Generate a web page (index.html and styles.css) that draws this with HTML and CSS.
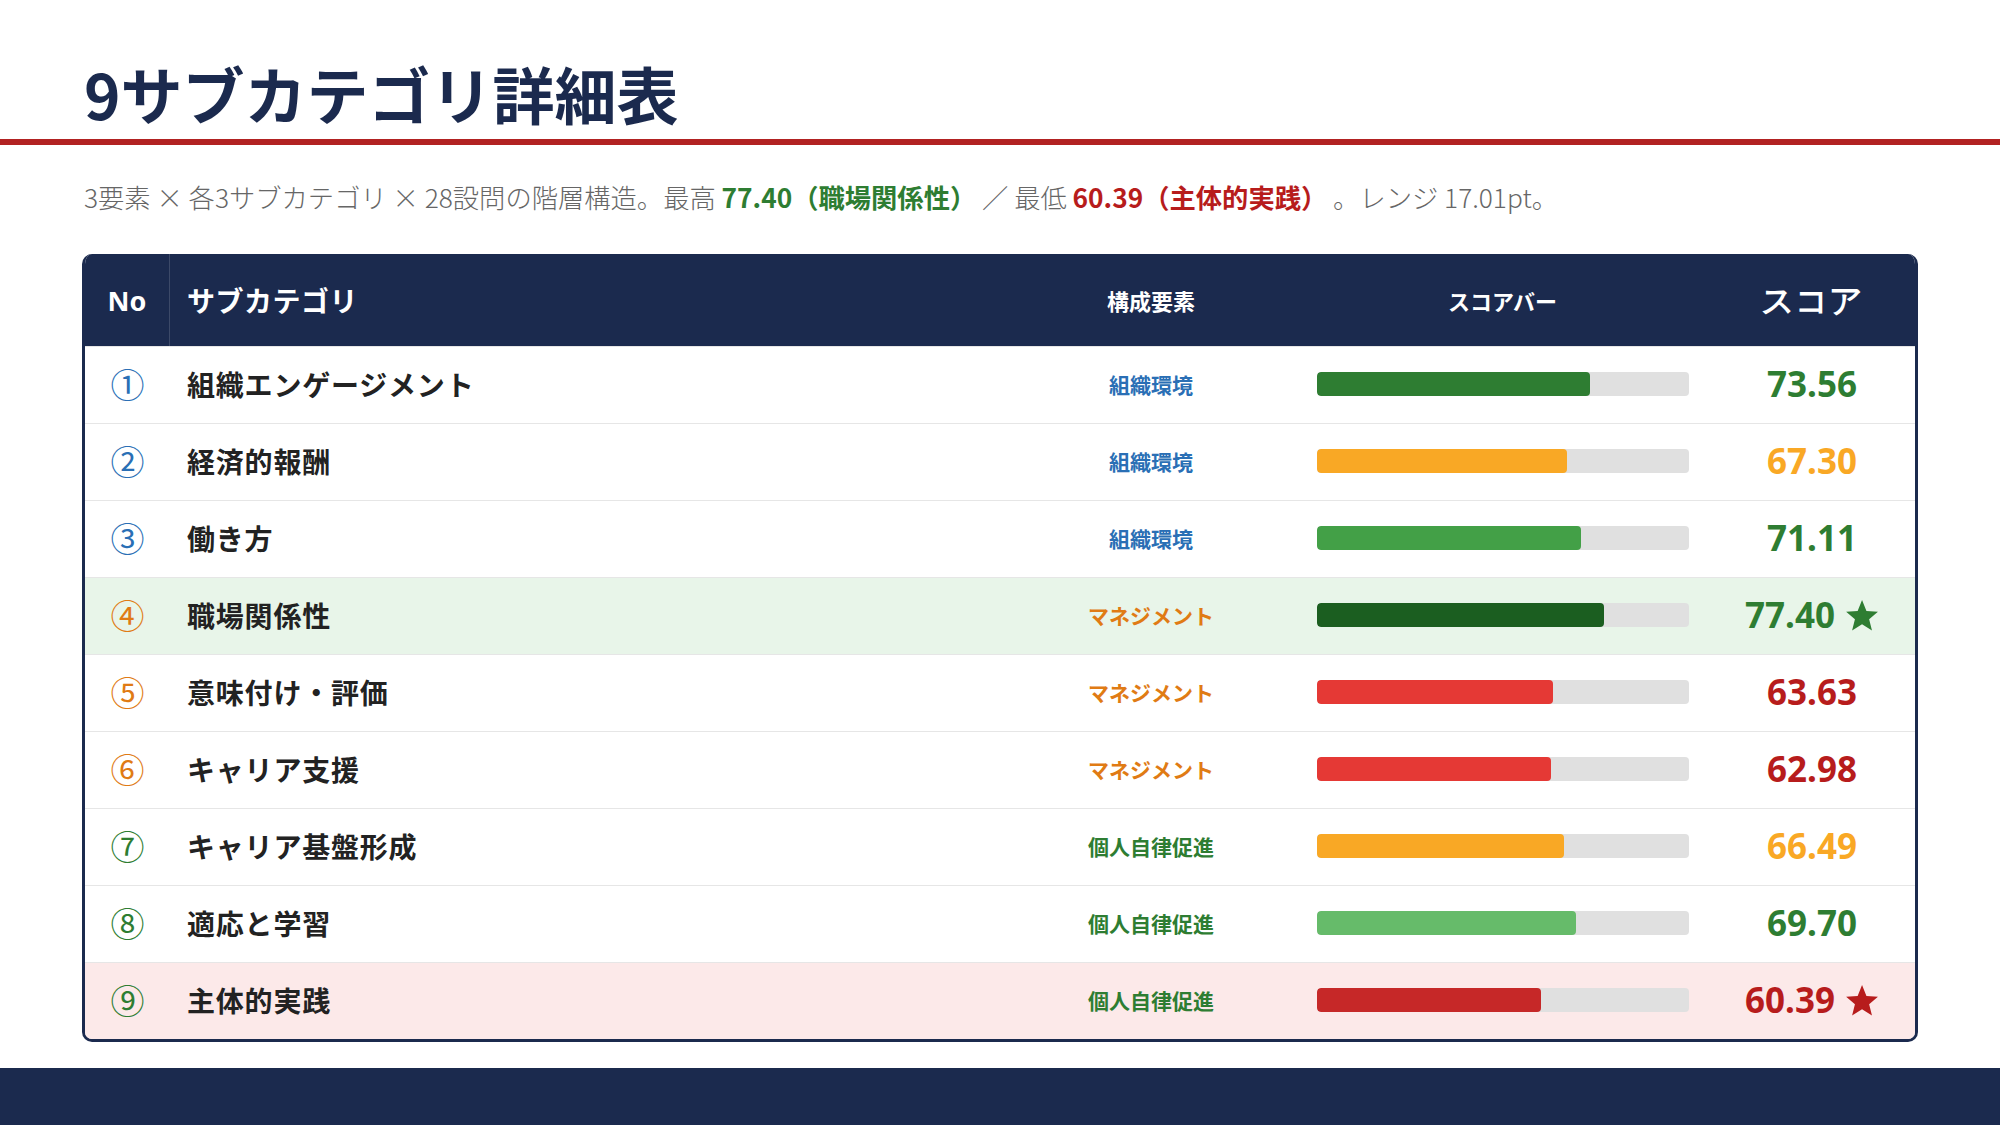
FILE: index.html
```html
<!DOCTYPE html>
<html lang="ja">
<head>
<meta charset="utf-8">
<title>9サブカテゴリ詳細表</title>
<link rel="stylesheet" href="styles.css">
</head>
<body>
<div class="page">
  <header class="top">
    <h1 class="title">9サブカテゴリ詳細表</h1>
  </header>
  <div class="rule"></div>
  <p class="lead">3要素 × 各3サブカテゴリ × 28設問の階層構造。最高 <b class="hi">77.40（職場関係性）</b> ／ 最低 <b class="lo">60.39（主体的実践）</b> 。レンジ 17.01pt。</p>

  <section class="table">
    <div class="row head">
      <div class="c-no">No</div>
      <div class="c-name">サブカテゴリ</div>
      <div class="c-el">構成要素</div>
      <div class="c-bar">スコアバー</div>
      <div class="c-score">スコア</div>
    </div>

    <div class="row">
      <div class="c-no num blue">①</div>
      <div class="c-name">組織エンゲージメント</div>
      <div class="c-el blue">組織環境</div>
      <div class="c-bar"><div class="track"><div class="fill g1" style="width:73.56%"></div></div></div>
      <div class="c-score green">73.56</div>
    </div>
    <div class="row">
      <div class="c-no num blue">②</div>
      <div class="c-name">経済的報酬</div>
      <div class="c-el blue">組織環境</div>
      <div class="c-bar"><div class="track"><div class="fill amber" style="width:67.30%"></div></div></div>
      <div class="c-score amber-t">67.30</div>
    </div>
    <div class="row">
      <div class="c-no num blue">③</div>
      <div class="c-name">働き方</div>
      <div class="c-el blue">組織環境</div>
      <div class="c-bar"><div class="track"><div class="fill g2" style="width:71.11%"></div></div></div>
      <div class="c-score green">71.11</div>
    </div>
    <div class="row best">
      <div class="c-no num orange">④</div>
      <div class="c-name">職場関係性</div>
      <div class="c-el orange">マネジメント</div>
      <div class="c-bar"><div class="track"><div class="fill g3" style="width:77.40%"></div></div></div>
      <div class="c-score green">77.40 <svg class="star" viewBox="0 0 24 24"><path d="M12 1.5l3.1 7.6 8.1.6-6.2 5.3 2 7.9L12 18.6l-7 4.3 2-7.9-6.2-5.3 8.1-.6z"/></svg></div>
    </div>
    <div class="row">
      <div class="c-no num orange">⑤</div>
      <div class="c-name">意味付け・評価</div>
      <div class="c-el orange">マネジメント</div>
      <div class="c-bar"><div class="track"><div class="fill r1" style="width:63.63%"></div></div></div>
      <div class="c-score red">63.63</div>
    </div>
    <div class="row">
      <div class="c-no num orange">⑥</div>
      <div class="c-name">キャリア支援</div>
      <div class="c-el orange">マネジメント</div>
      <div class="c-bar"><div class="track"><div class="fill r1" style="width:62.98%"></div></div></div>
      <div class="c-score red">62.98</div>
    </div>
    <div class="row">
      <div class="c-no num green">⑦</div>
      <div class="c-name">キャリア基盤形成</div>
      <div class="c-el green">個人自律促進</div>
      <div class="c-bar"><div class="track"><div class="fill amber" style="width:66.49%"></div></div></div>
      <div class="c-score amber-t">66.49</div>
    </div>
    <div class="row">
      <div class="c-no num green">⑧</div>
      <div class="c-name">適応と学習</div>
      <div class="c-el green">個人自律促進</div>
      <div class="c-bar"><div class="track"><div class="fill g4" style="width:69.70%"></div></div></div>
      <div class="c-score green">69.70</div>
    </div>
    <div class="row worst">
      <div class="c-no num green">⑨</div>
      <div class="c-name">主体的実践</div>
      <div class="c-el green">個人自律促進</div>
      <div class="c-bar"><div class="track"><div class="fill r2" style="width:60.39%"></div></div></div>
      <div class="c-score red">60.39 <svg class="star" viewBox="0 0 24 24"><path d="M12 1.5l3.1 7.6 8.1.6-6.2 5.3 2 7.9L12 18.6l-7 4.3 2-7.9-6.2-5.3 8.1-.6z"/></svg></div>
    </div>
  </section>

  <footer class="band"></footer>
</div>
</body>
</html>
```

FILE: styles.css
```css
* { box-sizing: border-box; }
html, body { margin: 0; padding: 0; }
body {
  background: #ffffff;
  font-family: "Noto Sans", "Noto Sans CJK JP", sans-serif;
  color: #222;
}
.page {
  width: 2000px;
  height: 1125px;
  display: flex;
  flex-direction: column;
  overflow: hidden;
}
.top {
  padding: 50px 84px 0;
  height: 139px;
}
.title {
  margin: 0;
  font-family: "Noto Sans CJK JP", sans-serif;
  font-size: 62px;
  line-height: 86px;
  font-weight: 700;
  color: #1b2a4e;
}
.rule {
  height: 6px;
  background: #b22222;
}
.lead {
  margin: 34px 84px 0;
  font-family: "Noto Sans CJK JP", sans-serif;
  font-size: 26.3px;
  line-height: 36px;
  font-weight: 300;
  color: #666;
}
.lead b { font-weight: 700; }
.lead .hi { color: #2e7d32; }
.lead .lo { color: #b71c1c; }

.table {
  margin: 39px 82px 0;
  border: 3px solid #1b2a4e;
  border-top: 0;
  border-radius: 10px;
  overflow: hidden;
  font-family: "Noto Sans CJK JP", sans-serif;
}
.row {
  display: grid;
  grid-template-columns: 85px 1fr 218px 485px 134px;
  padding-right: 36px;
  padding-bottom: 3px;
  height: 77px;
  align-items: center;
  border-top: 1px solid #e6e6e6;
  background: #fff;
}
.row.head {
  height: 92px;
  padding-bottom: 0;
  background: #1b2a4e;
  color: #fff;
  border-top: 0;
  font-weight: 700;
}
.row.head > div { height: 100%; display: flex; align-items: center; color: #fff; }
.row.head .c-no {
  justify-content: center;
  font-family: "Noto Sans", sans-serif;
  font-size: 27px;
  border-right: 1px solid rgba(255,255,255,0.15);
}
.row.head .c-name { font-size: 28px; padding-left: 17px; letter-spacing: 0.5px; }
.row.head .c-el { justify-content: center; font-size: 22px; }
.row.head .c-bar { justify-content: center; font-size: 22px; }
.row.head .c-score { justify-content: center; font-size: 33px; }

.row.best { background: #e8f5e9; }
.row.worst { background: #fce9e9; }

.c-no { text-align: center; }
.num { font-size: 34px; line-height: 1; font-weight: 400; }
.c-name {
  padding-left: 17px;
  font-size: 28px;
  font-weight: 700;
  color: #222;
  letter-spacing: 0.8px;
}
.c-el { text-align: center; font-size: 21px; font-weight: 700; }
.c-bar { display: flex; justify-content: center; }
.track {
  width: 372px;
  height: 24px;
  border-radius: 4px;
  background: #e0e0e0;
  overflow: hidden;
}
.fill { height: 100%; border-radius: 4px; }
.g1 { background: #2e7d32; }
.g2 { background: #43a047; }
.g3 { background: #1b5e20; }
.g4 { background: #66bb6a; }
.amber { background: #f9a825; }
.r1 { background: #e53935; }
.r2 { background: #c62828; }

.c-score {
  display: flex;
  justify-content: center;
  align-items: center;
  gap: 10px;
  font-family: "Noto Sans", sans-serif;
  font-size: 35px;
  font-weight: 700;
  white-space: nowrap;
}
.star { width: 36px; height: 36px; fill: currentColor; }

.blue { color: #2a6fb5; }
.orange { color: #e07b14; }
.green { color: #2e7d32; }
.amber-t { color: #f9a825; }
.red { color: #b71c1c; }

.band {
  margin-top: auto;
  height: 57px;
  background: #1b2a4e;
}
```
